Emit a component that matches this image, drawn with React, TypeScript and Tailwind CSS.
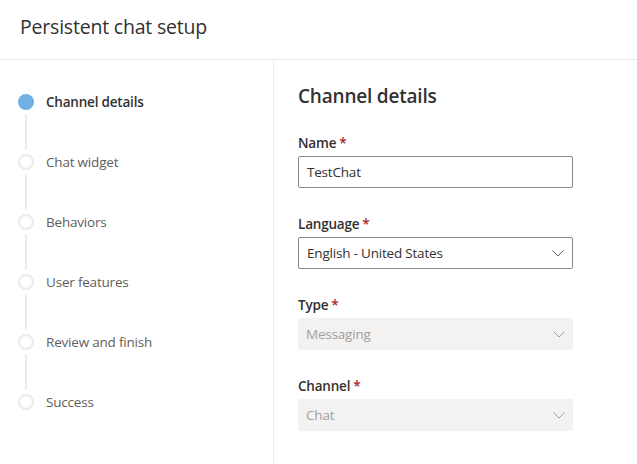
import React from "react";

const font = { fontFamily: '"Open Sans", "Noto Sans", sans-serif' };

function Chevron({ color }: { color: string }) {
  return (
    <svg width="12" height="7" viewBox="0 0 12 7" fill="none">
      <path d="M0.5 0.5 L6 6 L11.5 0.5" stroke={color} strokeWidth="1" />
    </svg>
  );
}

const steps = ["Channel details", "Chat widget", "Behaviors", "User features", "Review and finish", "Success"];

function Label({ text }: { text: string }) {
  return (
    <div className="h-[29px] pt-[4px] flex items-center text-[13.5px] font-semibold text-[#323130]">
      {text}
      <span className="text-[#a4262c] ml-[3px]">*</span>
    </div>
  );
}

export default function App() {
  return (
    <div className="w-[637px] h-[464px] bg-white flex flex-col overflow-hidden tracking-[-0.2px]" style={font}>
      <div className="h-[60px] shrink-0 border-b border-[#edebe9] flex items-center pl-[20px] pb-[5px]">
        <span className="text-[19.5px] text-[#323130]">Persistent chat setup</span>
      </div>
      <div className="flex flex-1">
        <div className="w-[274px] shrink-0 border-r border-[#edebe9] pt-[34px] pl-[18px]">
          {steps.map((s, i) => (
            <div key={s} className="flex flex-col">
              <div className="flex items-center h-[16px]">
                {i === 0 ? (
                  <div className="w-[16px] h-[16px] rounded-full bg-[#71afe5]" />
                ) : (
                  <div className="w-[16px] h-[16px] rounded-full border-2 border-[#edebe9] bg-white" />
                )}
                <span
                  className={
                    "ml-[12px] text-[13.5px] " +
                    (i === 0 ? "font-semibold text-[#323130]" : "text-[#605e5c]")
                  }
                >
                  {s}
                </span>
              </div>
              {i < steps.length - 1 && (
                <div className="h-[44px] flex flex-col justify-center pl-[7px]">
                  <div className="w-[2px] h-[36px] bg-[#edebe9]" />
                </div>
              )}
            </div>
          ))}
        </div>
        <div className="flex-1 pl-[24px] pt-[22px]">
          <div className="text-[19px] text-[#323130] font-semibold h-[28px] flex items-center">Channel details</div>
          <div className="mt-[17px]">
            <Label text="Name" />
            <div className="w-[275px] h-[32px] border border-[#8a8886] rounded-[2px] flex items-center px-[8px] text-[13.5px] text-[#323130]">
              TestChat
            </div>
          </div>
          <div className="mt-[20px]">
            <Label text="Language" />
            <div className="w-[275px] h-[32px] border border-[#8a8886] rounded-[2px] flex items-center justify-between pl-[8px] pr-[8px] text-[13.5px] text-[#323130]">
              <span>English - United States</span>
              <Chevron color="#605e5c" />
            </div>
          </div>
          <div className="mt-[20px]">
            <Label text="Type" />
            <div className="w-[275px] h-[32px] bg-[#f3f2f1] rounded-[2px] flex items-center justify-between pl-[8px] pr-[8px] text-[13.5px] text-[#a19f9d]">
              <span>Messaging</span>
              <Chevron color="#a19f9d" />
            </div>
          </div>
          <div className="mt-[20px]">
            <Label text="Channel" />
            <div className="w-[275px] h-[32px] bg-[#f3f2f1] rounded-[2px] flex items-center justify-between pl-[8px] pr-[8px] text-[13.5px] text-[#a19f9d]">
              <span>Chat</span>
              <Chevron color="#a19f9d" />
            </div>
          </div>
        </div>
      </div>
    </div>
  );
}
